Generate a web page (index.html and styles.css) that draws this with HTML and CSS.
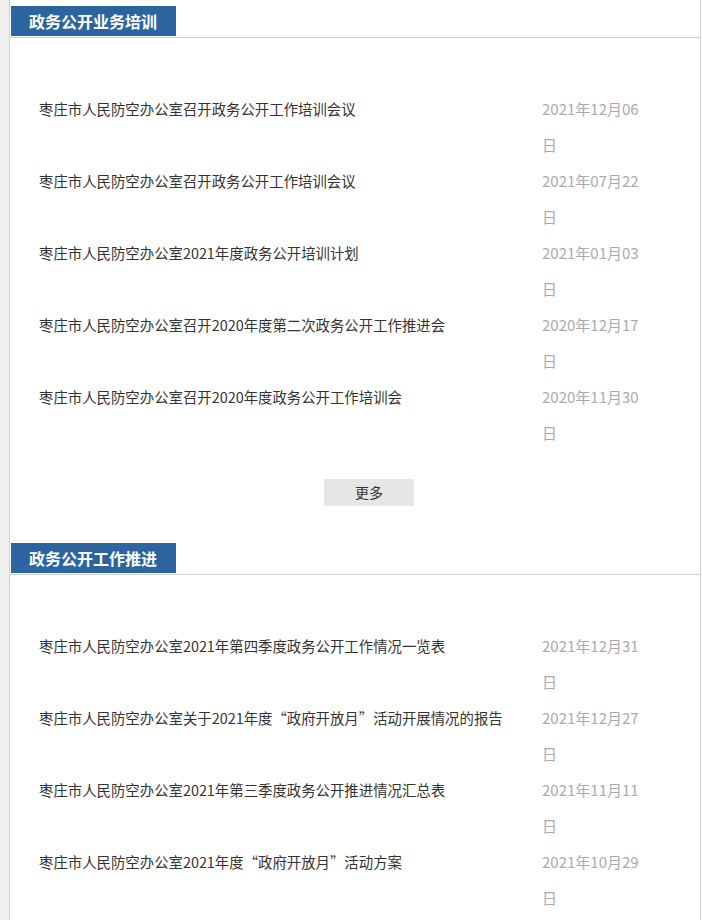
FILE: index.html
```html
<!DOCTYPE html>
<html lang="zh-CN">
<head>
  <meta charset="UTF-8" />
  <title>政务公开</title>
  <link rel="stylesheet" href="styles.css">
</head>
<body>
  <div class="page">
    <div class="main">

      <div class="section">
        <div class="sec-head"><span class="tab">政务公开业务培训</span></div>
        <ul class="news">
          <li><a class="title" href="#">枣庄市人民防空办公室召开政务公开工作培训会议</a><span class="date">2021年12月06日</span></li>
          <li><a class="title" href="#">枣庄市人民防空办公室召开政务公开工作培训会议</a><span class="date">2021年07月22日</span></li>
          <li><a class="title" href="#">枣庄市人民防空办公室2021年度政务公开培训计划</a><span class="date">2021年01月03日</span></li>
          <li><a class="title" href="#">枣庄市人民防空办公室召开2020年度第二次政务公开工作推进会</a><span class="date">2020年12月17日</span></li>
          <li><a class="title" href="#">枣庄市人民防空办公室召开2020年度政务公开工作培训会</a><span class="date">2020年11月30日</span></li>
        </ul>
        <div class="more-wrap"><a class="more" href="#">更多</a></div>
      </div>

      <div class="section">
        <div class="sec-head"><span class="tab">政务公开工作推进</span></div>
        <ul class="news">
          <li><a class="title" href="#">枣庄市人民防空办公室2021年第四季度政务公开工作情况一览表</a><span class="date">2021年12月31日</span></li>
          <li><a class="title" href="#">枣庄市人民防空办公室关于2021年度“政府开放月”活动开展情况的报告</a><span class="date">2021年12月27日</span></li>
          <li><a class="title" href="#">枣庄市人民防空办公室2021年第三季度政务公开推进情况汇总表</a><span class="date">2021年11月11日</span></li>
          <li><a class="title" href="#">枣庄市人民防空办公室2021年度“政府开放月”活动方案</a><span class="date">2021年10月29日</span></li>
        </ul>
      </div>

    </div>
  </div>
</body>
</html>
```

FILE: styles.css
```css
body {
  margin: 0;
  background: #fff;
  font-family: "Noto Sans CJK SC", "Noto Sans", sans-serif;
  color: #333;
}

.page {
  width: 701px;
  padding-left: 9px;
  box-sizing: border-box;
  background: #f0f0f0;
}

.main {
  background: #fff;
  border-left: 1px solid #d0d0d0;
  border-right: 1px solid #d0d0d0;
  min-height: 920px;
}

.section + .section {
  margin-top: 31px;
}

.sec-head {
  padding: 6px 0 0 1px;
  border-bottom: 1px solid #d0d0d0;
}

.tab {
  display: block;
  width: 147px;
  height: 30px;
  margin-bottom: 1px;
  padding-left: 18px;
  background: #2c64a0;
  color: #fff;
  font-size: 16px;
  font-weight: bold;
  line-height: 30px;
}

.news {
  list-style: none;
  margin: 0;
  padding: 53px 0 0 0;
}

.news li {
  display: flex;
  font-size: 15px;
  line-height: 36px;
}

.title {
  width: 503px;
  padding-left: 29px;
  color: #333;
  font-size: 14.4px;
  text-decoration: none;
}

.date {
  width: 100px;
  color: #aaa;
}

.more-wrap {
  padding: 28px 0 0 28px;
  text-align: center;
}

.more {
  display: inline-block;
  width: 90px;
  height: 27px;
  line-height: 27px;
  background: #e6e6e6;
  color: #333;
  font-size: 14px;
  text-decoration: none;
}
```
